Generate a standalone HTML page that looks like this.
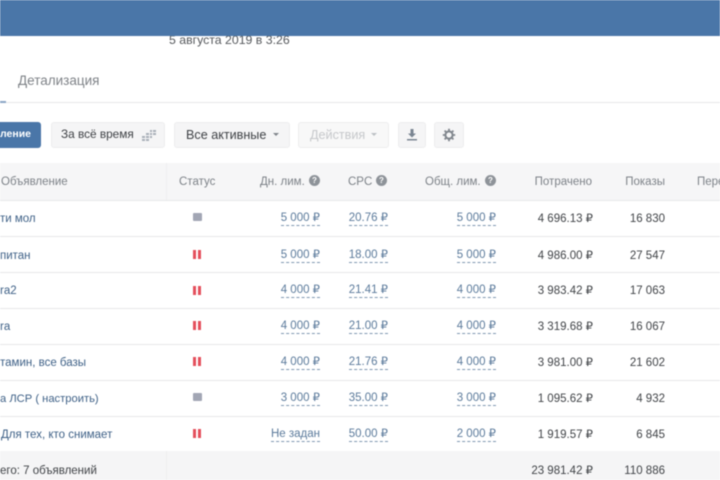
<!DOCTYPE html>
<html lang="ru"><head><meta charset="utf-8"><style>
html,body{margin:0;padding:0;background:#fff}
#p{position:relative;width:720px;height:480px;overflow:hidden;background:#fff;font:11.5px/14px "Liberation Sans",sans-serif;color:#4a4f55}
#w{position:absolute;inset:0;filter:blur(.45px)}
#w div{position:absolute;white-space:nowrap}
.t{height:14px}
.r{text-align:right}
.n{color:#3f6187}
.d{color:#5b7a9b;border-bottom:1px dashed #7f97b1;line-height:13px;height:13px}
.h{color:#7d8288}
.v{color:#404347}
.l{left:0;width:720px;height:1px;background:#e7e8ea}
.b{background:#f5f5f6;border-radius:3px;height:26px;border:1px solid #ededee;box-sizing:border-box}
.q{width:11px;height:11px;border-radius:50%;background:#8e9399;color:#fff;font-size:8px;line-height:11px;text-align:center;font-weight:bold}
.s{left:193px;width:9px;height:8px;background:#a2a6b4;border-radius:1px}
.p1,.p2{width:3px;height:9px;background:#e4505c}
.p1{left:193px}.p2{left:198px}
</style></head><body><div id="p"><div id="w">
<div style="left:0;top:0;width:720px;height:36px;background:#4a76a8;z-index:2"></div>
<div class="t" style="left:169px;top:33px;color:#55585c;font-size:12.3px">5 августа 2019 в 3:26</div>
<div class="t" style="left:18px;top:74px;color:#7f8388;font-size:13.5px">Детализация</div>
<div style="left:0;top:102px;width:720px;height:1px;background:#e7e8ea"></div>
<div style="left:0;top:101px;width:6px;height:2px;background:#8ba6c5"></div>

<div style="left:-10px;top:122px;width:51px;height:26px;background:#4a76a8;border-radius:3px"></div>
<div class="t" style="left:0;top:127px;color:#fff;font-size:10.5px;font-weight:bold">ление</div>
<div class="b" style="left:51px;top:122px;width:114px"></div>
<div class="t" style="left:61px;top:127px;color:#3c3f43;font-size:11.8px">За всё время</div>
<svg style="position:absolute;left:141px;top:129px" width="16" height="12" viewBox="0 0 16 12" fill="#a9afb8"><path d="M9 1h2v2H9zM12 1h3v2h-3zM5 4h3v2H5zM9 4h2v2H9zM12 4h3v2h-3zM1 7h3v2H1zM5 7h3v2H5zM9 7h2v2H9zM1 10h3v2H1zM5 10h3v2H5z"/></svg>
<div class="b" style="left:174px;top:122px;width:116px"></div>
<div class="t" style="left:186px;top:128px;color:#3f4246;font-size:12.6px">Все активные</div>
<div style="left:273px;top:133px;border:3px solid transparent;border-top:3px solid #80858b;border-bottom:0"></div>
<div class="b" style="left:298px;top:122px;width:91px;background:#f8f8f8"></div>
<div class="t" style="left:310px;top:128px;color:#c6c8cb;font-size:12.6px">Действия</div>
<div style="left:371px;top:133px;border:3px solid transparent;border-top:3px solid #bcc0c4;border-bottom:0"></div>
<div class="b" style="left:398px;top:122px;width:28px"></div>
<svg style="position:absolute;left:405px;top:128px" width="14" height="14" viewBox="0 0 14 14" fill="#7a8592"><path d="M5.5 1h3v4.5H11L7 9.5 3 5.5h2.5zM2 11h10v1.5H2z"/></svg>
<div class="b" style="left:434px;top:122px;width:30px"></div>
<svg style="position:absolute;left:442px;top:128px" width="14" height="14" viewBox="0 0 14 14" fill="none" stroke="#80868d"><circle cx="7" cy="7" r="3.6" stroke-width="2"/><path stroke-width="1.8" d="M7 .8v2M7 11.2v2M.8 7h2M11.2 7h2M2.6 2.6L4 4M10 10l1.4 1.4M2.6 11.4L4 10M10 4l1.4-1.4"/></svg>

<div style="left:0;top:163px;width:720px;height:37px;background:#f6f6f7"></div>
<div style="left:0;top:451px;width:720px;height:29px;background:#f5f5f6"></div>
<div style="left:166px;top:163px;width:1px;height:37px;background:#efeff0"></div>
<div style="left:166px;top:451px;width:1px;height:29px;background:#efeff0"></div>

<div class="t h" style="left:1px;top:175px">Объявление</div>
<div class="t h" style="left:179px;top:175px">Статус</div>
<div class="t h" style="left:260px;top:175px">Дн. лим.</div><div class="q" style="left:309px;top:175px">?</div>
<div class="t h" style="left:348px;top:175px">CPC</div><div class="q" style="left:376px;top:175px">?</div>
<div class="t h" style="left:425px;top:175px">Общ. лим.</div><div class="q" style="left:485px;top:175px">?</div>
<div class="t h r" style="left:492px;width:100px;top:175px">Потрачено</div>
<div class="t h r" style="left:565px;width:100px;top:175px">Показы</div>
<div class="t h" style="left:697px;top:175px">Пере</div>

<div class="l" style="top:200px"></div><div class="l" style="top:236px"></div><div class="l" style="top:272px"></div><div class="l" style="top:308px"></div><div class="l" style="top:344px"></div><div class="l" style="top:380px"></div><div class="l" style="top:416px"></div>

<div class="t n" style="left:0;top:212px">ти мол</div>
<div class="t n" style="left:0;top:249px">питан</div>
<div class="t n" style="left:0;top:284px">ra2</div>
<div class="t n" style="left:0;top:320px">ra</div>
<div class="t n" style="left:0;top:356px">тамин, все базы</div>
<div class="t n" style="left:0;top:392px;font-size:11.2px">а ЛСР ( настроить)</div>
<div class="t n" style="left:1px;top:428px">Для тех, кто снимает</div>
<div class="t v" style="left:0;top:464px">его: 7 объявлений</div>

<div class="s" style="top:213px"></div>
<div class="p1" style="top:250px"></div><div class="p2" style="top:250px"></div>
<div class="p1" style="top:286px"></div><div class="p2" style="top:286px"></div>
<div class="p1" style="top:321px"></div><div class="p2" style="top:321px"></div>
<div class="p1" style="top:357px"></div><div class="p2" style="top:357px"></div>
<div class="s" style="top:393px"></div>
<div class="p1" style="top:429px"></div><div class="p2" style="top:429px"></div>

<div class="d r" style="right:400px;top:212px">5 000 ₽</div><div class="d r" style="right:332px;top:212px">20.76 ₽</div><div class="d r" style="right:224px;top:212px">5 000 ₽</div><div class="t v r" style="right:127px;top:212px">4 696.13 ₽</div><div class="t v r" style="right:55px;top:212px">16 830</div>
<div class="d r" style="right:400px;top:249px">5 000 ₽</div><div class="d r" style="right:332px;top:249px">18.00 ₽</div><div class="d r" style="right:224px;top:249px">5 000 ₽</div><div class="t v r" style="right:127px;top:249px">4 986.00 ₽</div><div class="t v r" style="right:55px;top:249px">27 547</div>
<div class="d r" style="right:400px;top:284px">4 000 ₽</div><div class="d r" style="right:332px;top:284px">21.41 ₽</div><div class="d r" style="right:224px;top:284px">4 000 ₽</div><div class="t v r" style="right:127px;top:284px">3 983.42 ₽</div><div class="t v r" style="right:55px;top:284px">17 063</div>
<div class="d r" style="right:400px;top:320px">4 000 ₽</div><div class="d r" style="right:332px;top:320px">21.00 ₽</div><div class="d r" style="right:224px;top:320px">4 000 ₽</div><div class="t v r" style="right:127px;top:320px">3 319.68 ₽</div><div class="t v r" style="right:55px;top:320px">16 067</div>
<div class="d r" style="right:400px;top:356px">4 000 ₽</div><div class="d r" style="right:332px;top:356px">21.76 ₽</div><div class="d r" style="right:224px;top:356px">4 000 ₽</div><div class="t v r" style="right:127px;top:356px">3 981.00 ₽</div><div class="t v r" style="right:55px;top:356px">21 602</div>
<div class="d r" style="right:400px;top:392px">3 000 ₽</div><div class="d r" style="right:332px;top:392px">35.00 ₽</div><div class="d r" style="right:224px;top:392px">3 000 ₽</div><div class="t v r" style="right:127px;top:392px">1 095.62 ₽</div><div class="t v r" style="right:55px;top:392px">4 932</div>
<div class="d r" style="right:400px;top:428px">Не задан</div><div class="d r" style="right:332px;top:428px">50.00 ₽</div><div class="d r" style="right:224px;top:428px">2 000 ₽</div><div class="t v r" style="right:127px;top:428px">1 919.57 ₽</div><div class="t v r" style="right:55px;top:428px">6 845</div>
<div class="t v r" style="right:127px;top:464px">23 981.42 ₽</div><div class="t v r" style="right:55px;top:464px">110 886</div>
</div></div></body></html>
